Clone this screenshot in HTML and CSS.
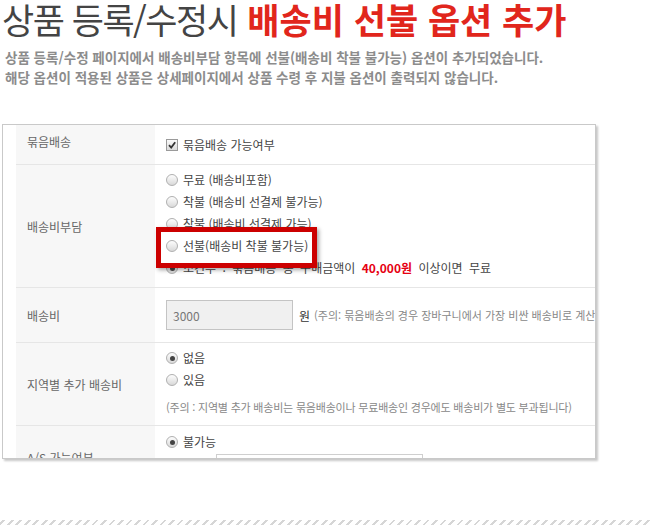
FILE: index.html
```html
<!DOCTYPE html>
<html lang="ko">
<head>
<meta charset="utf-8">
<title>배송비 선불 옵션 추가</title>
<link rel="stylesheet" href="styles.css">
</head>
<body>
<div class="page">
  <h1 class="title"><span class="title-gray">상품 등록/수정시</span> <span class="title-red">배송비 선불 옵션 추가</span></h1>
  <p class="desc">상품 등록/수정 페이지에서 배송비부담 항목에 선불(배송비 착불 불가능) 옵션이 추가되었습니다.<br>해당 옵션이 적용된 상품은 상세페이지에서 상품 수령 후 지불 옵션이 출력되지 않습니다.</p>

  <div class="shot">
    <div class="row row-1">
      <div class="label label-top">묶음배송</div>
      <div class="value value-center">
        <label class="opt"><span class="check"><svg viewBox="0 0 10 10" width="10" height="10"><path d="M2 5.2 L4.2 7.6 L8.2 2.2" fill="none" stroke="#333" stroke-width="1.8"/></svg></span>묶음배송 가능여부</label>
      </div>
    </div>
    <div class="row row-2">
      <div class="label">배송비부담</div>
      <div class="value list">
        <label class="opt"><span class="radio"></span>무료 (배송비포함)</label>
        <label class="opt"><span class="radio"></span>착불 (배송비 선결제 불가능)</label>
        <label class="opt"><span class="radio"></span>착불 (배송비 선결제 가능)</label>
        <label class="opt opt-hl"><span class="radio"></span>선불(배송비 착불 불가능)</label>
        <label class="opt opt-wide"><span class="radio on"></span>조건부 : 묶음배송 총 구매금액이&nbsp;<b class="amount">40,000원</b>&nbsp;이상이면 무료</label>
      </div>
    </div>
    <div class="row row-3">
      <div class="label">배송비</div>
      <div class="value value-center">
        <span class="field">3000</span><span class="won">원</span><span class="note">(주의: 묶음배송의 경우 장바구니에서 가장 비싼 배송비로 계산됩니다)</span>
      </div>
    </div>
    <div class="row row-4">
      <div class="label">지역별 추가 배송비</div>
      <div class="value list list-4">
        <label class="opt"><span class="radio on"></span>없음</label>
        <label class="opt"><span class="radio"></span>있음</label>
        <p class="note note-block">(주의 : 지역별 추가 배송비는 묶음배송이나 무료배송인 경우에도 배송비가 별도 부과됩니다)</p>
      </div>
    </div>
    <div class="row row-5">
      <div class="label">A/S 가능여부</div>
      <div class="value list list-5">
        <label class="opt"><span class="radio on"></span>불가능</label>
        <span class="field field-wide"></span>
      </div>
    </div>
  </div>

  <div class="stripe"></div>
</div>
</body>
</html>
```

FILE: styles.css
```css
*, *::before, *::after { box-sizing: border-box; }

html, body {
  margin: 0;
  padding: 0;
  background: #fff;
}

body {
  font-family: "Noto Sans CJK KR", "Noto Sans", sans-serif;
  color: #444;
}

.page {
  min-height: 525px;
  display: flex;
  flex-direction: column;
  overflow: hidden;
}

.title {
  margin: 0;
  padding-left: 2px;
  font-size: 35px;
  line-height: 38px;
  white-space: nowrap;
}

.title-gray {
  color: #444;
  font-weight: 400;
  letter-spacing: -1.5px;
}

.title-red {
  color: #e1261c;
  font-weight: 700;
}

.desc {
  margin: 9px 0 0;
  padding-left: 5px;
  font-size: 13.5px;
  line-height: 20px;
  font-weight: 700;
  color: #8c8c8c;
  white-space: nowrap;
}

.shot {
  position: relative;
  margin: 37px 0 0 2px;
  width: 594px;
  height: 335px;
  border: 1px solid #c9c9c9;
  box-shadow: 2px 2px 2px rgba(0, 0, 0, 0.22);
  padding-left: 13px;
  overflow: hidden;
  font-size: 12px;
}

.row {
  display: grid;
  grid-template-columns: 139px 1fr;
  border-bottom: 1px solid #e6e6e6;
}

.row-1 { height: 40px; }
.row-2 { height: 123px; }
.row-3 { height: 55px; }
.row-4 { height: 83px; }
.row-5 { height: 62px; border-bottom: 0; }

.label {
  background: #f7f7f7;
  color: #666;
  padding-left: 11px;
  display: flex;
  align-items: center;
  white-space: nowrap;
}

.label-top {
  align-items: flex-start;
  padding-top: 8px;
}

.value {
  padding-left: 11px;
  white-space: nowrap;
  min-width: 0;
}

.value-center {
  display: flex;
  align-items: center;
}

.list {
  display: flex;
  flex-direction: column;
  padding-top: 4px;
}

.list-4 { padding-top: 4px; }
.list-5 { padding-top: 5px; }

.opt {
  display: flex;
  align-items: center;
  height: 22px;
  line-height: 22px;
  color: #444;
}

.opt-wide {
  word-spacing: 3px;
}

.opt-hl {
  position: relative;
  z-index: 1;
  align-self: flex-start;
}

.opt-hl::before {
  content: "";
  position: absolute;
  z-index: -1;
  left: -10px;
  top: -8px;
  width: 161px;
  height: 41px;
  border: 5px solid #cc0000;
  background: #fff;
  box-shadow: 2px 2px 4px rgba(0, 0, 0, 0.35);
}

.radio {
  width: 12px;
  height: 12px;
  margin-right: 5px;
  border-radius: 50%;
  border: 1px solid #b0b0b0;
  background: linear-gradient(#fdfdfd, #d9d9d9);
  display: inline-flex;
  align-items: center;
  justify-content: center;
  flex: none;
}

.radio.on::after {
  content: "";
  width: 5px;
  height: 5px;
  border-radius: 50%;
  background: #444;
}

.check {
  width: 12px;
  height: 12px;
  margin-right: 5px;
  border: 1px solid #9a9a9a;
  background: linear-gradient(#fafafa, #dadada);
  display: inline-flex;
  align-items: center;
  justify-content: center;
  flex: none;
}

.amount {
  color: #e60012;
  font-weight: 700;
  word-spacing: 0;
}

.field {
  display: inline-flex;
  align-items: center;
  width: 127px;
  height: 30px;
  padding-left: 6px;
  border: 1px solid #c4c4c4;
  background: #f0f0f0;
  color: #777;
  flex: none;
}

.won {
  margin-left: 6px;
  color: #333;
}

.note {
  margin-left: 4px;
  font-size: 11px;
  color: #888;
}

.note-block {
  margin: 8px 0 0;
  line-height: 16px;
  letter-spacing: -0.2px;
}

.field-wide {
  margin-top: 1px;
  margin-left: 50px;
  width: 207px;
  height: 30px;
  background: #fff;
  border-color: #cfcfcf;
}

.stripe {
  margin-top: auto;
  height: 5px;
  background: repeating-linear-gradient(135deg, #fff 0 2px, #d6d6d6 2px 4px, #fff 4px 6px);
}
```
